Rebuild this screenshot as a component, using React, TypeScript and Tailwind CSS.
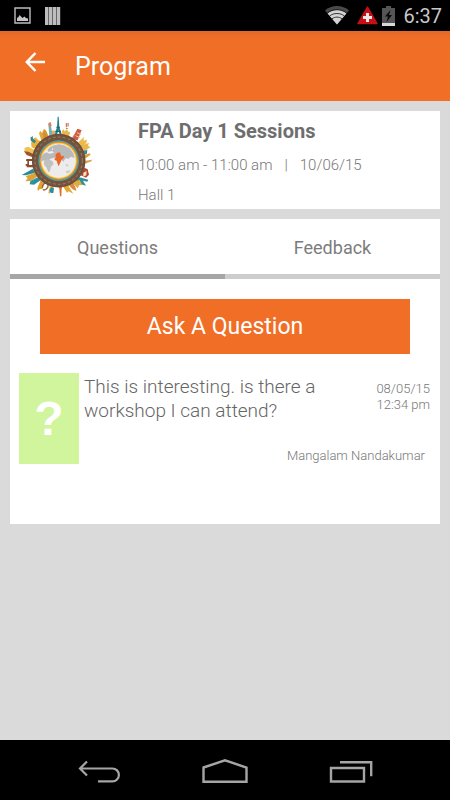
import React, { useState } from "react";

const TABS = ["Questions", "Feedback"];

const QUESTIONS = [
  {
    id: 1,
    text: "This is interesting. is there a workshop I can attend?",
    date: "08/05/15",
    time: "12:34 pm",
    author: "Mangalam Nandakumar",
  },
];

function StatusBar() {
  return (
    <div className="flex h-[31px] items-center justify-between bg-black pr-2 pl-3.5">
      <div className="flex items-center gap-3.5">
        <svg width="17" height="17" viewBox="0 0 17 17" fill="none">
          <path d="M1 1h15v15H1z" stroke="#bdbdbd" strokeWidth="1.4" />
          <path d="M3 14v-3l1.500-1 1-2 2 2 1 1 2-1.500 1.500 1.500 2 .5V14z" fill="#c4c4c4" />
        </svg>
        <svg width="16" height="20" viewBox="0 0 16 20">
          <path d="M0 1h3.200v18H0zM4 1h3.200v18H4zM8 1h3.200v18H8zM12 1h3.200v18H12z" fill="#bdbdbd" />
          <path d="M3.200 1h.8v18h-.8zM7.200 1h.8v18h-.8zM11.200 1h.8v18h-.8z" fill="#777" />
        </svg>
      </div>
      <div className="flex items-center gap-1">
        <svg className="mr-1" width="24" height="19" viewBox="0 0 24 19">
          <path d="M12 18.500L0 4.500C3 1.600 7.500 0 12 0s9 1.600 12 4.500z" fill="#4a4a4a" />
          <path d="M12 18.500L2.600 7.600C5 5.300 8.400 4 12 4s7 1.300 9.400 3.600z" fill="#d4d4d4" />
          <g fill="none" stroke="#111" strokeWidth=".8">
            <path d="M2.200 7.200C5 4.800 8.400 3.700 12 3.700s7 1.100 9.800 3.500" />
            <path d="M4.600 10C6.600 8.300 9.200 7.500 12 7.500s5.400.8 7.400 2.500" />
            <path d="M7 12.800c1.500-1.100 3.200-1.700 5-1.700s3.500.6 5 1.700" />
          </g>
        </svg>
        <svg width="21" height="19" viewBox="0 0 21 19">
          <path d="M10.500 1L20 17.500H1z" fill="#c80f16" stroke="#c80f16" strokeWidth="1.400" strokeLinejoin="round" />
          <path d="M9 7h3v3h3v3h-3v3H9v-3H6v-3h3z" fill="#e8e8e8" />
        </svg>
        <svg className="mr-1" width="13" height="20" viewBox="0 0 13 20">
          <path d="M4 0h5v2h4v15H0V2h4z" fill="#555" />
          <path d="M0 17h13v3H0z" fill="#d8d8d8" />
          <path d="M8.500 4L3 10.500h3L4.500 16 10 9H7z" fill="#080808" />
        </svg>
        <span className="text-xl leading-6 text-[#c8c8c8]">6:37</span>
      </div>
    </div>
  );
}

function GlobeLogo() {
  return (
    <svg width="85" height="95" viewBox="0 0 255 285" role="img" aria-label="Globe ringed by landmarks">
      {/* landmarks on the left side */}
      <path d="M80 94L72 70l4-8 5 7 5-12 7 4 5 12 10 14z" fill="#e0a838" />
      <path d="M83 72l6-13 8 13v16H85z" fill="#d29134" />
      <path d="M48 100l6-13 8-5 8 9 14 4-19 24-15-7z" fill="#e7b13c" />
      <path d="M46 83l7-5 1 8 9 7-4 7-11-7z" fill="#2d8a94" />
      <path d="M29 113l11-3 20 11-4 15-19-9-9-2z" fill="#efc251" />
      <path d="M27 124l13 1 17 8-4 9-18-7z" fill="#9c552e" />
      <path d="M34 147h22v6H42v12h12v7H35v-5h-3v-5h5v-9h-4z" fill="#8d4b2b" />
      <path d="M20 195l34-19 6 12-27 8z" fill="#278b98" />
      <path d="M32 199l31-12 6 12-21 14-17 1 7-9z" fill="#dfa239" />
      <path d="M46 214l25-14 7 10-21 14-13-1z" fill="#2a929c" />
      <path d="M68 232l9-21 11 8-5 17-10 2-2 4-4-3z" fill="#e3a12d" />
      <path d="M82 233c0-11 11-19 16-10s-9 22-14 15" fill="none" stroke="#94613a" strokeWidth="4" />
      <path d="M100 249l5-24 12 3-4 13-8 3v7z" fill="#e3b255" />
      <path d="M103 241l6-9 8 3-2 14h-8z" fill="#27909a" />
      {/* landmarks along the top */}
      <path d="M103 79l-3-37h7l6 34z" fill="#79b0b5" />
      <path d="M100 39l7-3 3 12-8 2z" fill="#d9825c" />
      <path d="M111 77V62h10v15z" fill="#d9b468" />
      <path d="M119 75l7-24 2-31h3l2 31 8 24h-7l-4-15-4 15z" fill="#277d89" />
      <path d="M124 50h11v3h-11zM121 62h17v4h-17z" fill="#16677a" />
      <path d="M139 78l2-14 4-7 4 7 7-6 4 7 6 2-7 19z" fill="#e8b848" />
      <ellipse cx="156" cy="45" rx="6" ry="7" fill="#f3d0bd" />
      <path d="M153 39h3v13h-3zM158 39h3v9h-3z" fill="#dc7962" />
      <path d="M153 54h5v3h-5z" fill="#a67752" />
      <path d="M169 87l19-31 6 3-8 31z" fill="#c87854" />
      <path d="M187 57l13 3-12 31-13-4z" fill="#ce5b42" />
      <path d="M186 68l12 6M182 77l13 6" stroke="#f4c7a0" strokeWidth="3" />
      {/* landmarks on the right side */}
      <path d="M187 100l14-14 5-6v12l10-3-2 10-18 16z" fill="#edbb49" />
      <path d="M194 108l16-5 12-5-3 10 8 3-23 16z" fill="#e6b84f" />
      <path d="M200 124l17-4-1 11-11 5z" fill="#348e98" />
      <path d="M205 137l18-7 4 4-18 12z" fill="#e29c35" />
      <path d="M208 153l22-4v5l-20 7z" fill="#d9a550" />
      <path d="M208 173l10 5 4 16-9 9-16-7z" fill="#b7472d" />
      <path d="M205 188l10-5-1 13-9 4z" fill="#f1e0c3" />
      <path d="M191 201l29 8-3 6-13-3 9 15-20-6-12-9z" fill="#308f98" />
      <path d="M180 212l14-2 8 15-10 1-4 9-14-15z" fill="#dfac3e" />
      <path d="M160 224l13-8 9 17 2 10-11-5z" fill="#d98a3d" />
      <path d="M145 231l13-7 17 27-14-7-5 4z" fill="#e4a92d" />
      <path d="M130 226h13l-3 11-1 22h-4l-2-22z" fill="#df6d27" />
      {/* road ring */}
      <circle cx="131" cy="152" r="80" fill="#73533e" />
      <circle cx="131" cy="152" r="79" fill="none" stroke="#644735" strokeWidth="2" />
      <circle cx="131" cy="152" r="71" fill="none" stroke="#b8977a" strokeWidth="2" strokeDasharray="8 7" />
      <circle cx="131" cy="152" r="61" fill="#4ca3a1" />
      <circle cx="131" cy="152" r="57" fill="#f18524" />
      <circle cx="131" cy="152" r="54" fill="#f8cd53" />
      <circle cx="131" cy="152" r="51" fill="#fff1c4" />
      <circle cx="132" cy="152" r="49" fill="#ececec" />
      <path d="M105 111l12-5 15-3 15 3 17 9 11 14 4 15-11-4-8 7-8-3-7 11-9-10-9 6-9-8-12 3-6 8-13-3-11 4 3-16 9-9 12-5-3-6z" fill="#b9b9b9" />
      <path d="M87 151l12-3 13 5 4 9-8 8-3 13-5 4-5-14-8-9z" fill="#c1c1c1" />
      <path d="M151 161l8 3 2 6-7-2zM151 184l13-4 2 5-9 6z" fill="#cdcdcd" />
      <path d="M94 127l18-4 5 5-13 3zM111 112l4 8-4-1z" fill="#f0f0f0" />
      <path d="M126 129l8-2 3 7 2 5 8-1-1 6-6 5-5 11-4 9-4-9-2-8-7-3 5-8-2-5z" fill="#ec6528" />
    </svg>
  );
}

function SessionCard() {
  return (
    <section className="flex h-[98px] bg-white pl-[5px]">
      <div className="-mt-px w-[85px] shrink-0">
        <GlobeLogo />
      </div>
      <div className="pt-1.5 pl-[38px] text-[#777]">
        <h2 className="text-xl leading-7 font-bold text-[#6e6e6e]">FPA Day 1 Sessions</h2>
        <p className="mt-2 flex text-[15px] leading-6 font-light">
          <span>10:00 am - 11:00 am</span>
          <span className="px-3">|</span>
          <span>10/06/15</span>
        </p>
        <p className="mt-1.5 text-[15px] leading-6 font-light">Hall 1</p>
      </div>
    </section>
  );
}

function QuestionItem({ question }: { question: (typeof QUESTIONS)[number] }) {
  return (
    <li className="flex">
      <div className="flex h-[91px] w-[60px] shrink-0 items-center justify-center bg-[#d1f59c] font-['Liberation_Sans',sans-serif] text-5xl font-bold text-white">
        ?
      </div>
      <div className="flex flex-1 flex-col justify-between pl-[5px]">
        <div className="flex justify-between">
          <p className="w-[250px] pt-0.5 text-[19px] leading-6 font-light text-[#666]">{question.text}</p>
          <div className="pt-2 text-right text-[13px] leading-4 font-light text-[#777]">
            <div>{question.date}</div>
            <div>{question.time}</div>
          </div>
        </div>
        <div className="pr-[5px] text-right text-[13px] leading-4 font-light text-[#777]">{question.author}</div>
      </div>
    </li>
  );
}

function NavBar() {
  return (
    <nav className="flex h-[60px] justify-center bg-black text-[#a5a5a5]">
      <button type="button" aria-label="Back" className="flex w-[126px] items-center justify-center pt-1">
        <svg width="44" height="24" viewBox="0 0 44 24" fill="none" stroke="currentColor" strokeWidth="2.2">
          <path d="M10 1.500L3 8.500l7 7M3 8.500h32.500a6.300 6.300 0 0 1 0 12.800H21" />
        </svg>
      </button>
      <button type="button" aria-label="Home" className="flex w-[126px] items-center justify-center pt-0.5">
        <svg width="48" height="26" viewBox="0 0 48 26" fill="none" stroke="currentColor" strokeWidth="2.4">
          <path d="M2.500 9.500L24 2.300l21.500 7.200v14.200h-43z" />
        </svg>
      </button>
      <button type="button" aria-label="Recent apps" className="flex w-[126px] items-center justify-center pt-1">
        <svg width="44" height="24" viewBox="0 0 44 24" fill="none" stroke="currentColor" strokeWidth="2.4">
          <path d="M2 8h33v13.500H2zM11 2.200h31.200v14" />
        </svg>
      </button>
    </nav>
  );
}

export default function App() {
  const [tab, setTab] = useState("Questions");

  return (
    <div className="flex min-h-screen flex-col bg-[#dadada] font-[Roboto,sans-serif]">
      <StatusBar />
      <header className="flex h-[70px] bg-[#f06e26] bg-linear-to-b from-[#e4682a] to-[#f06e26] to-10% pl-[25px] text-white">
        <button type="button" aria-label="Go back" className="flex h-[61px] w-[50px] items-center">
          <svg width="20" height="20" viewBox="0 0 20 20" fill="none" stroke="currentColor" strokeWidth="2.5">
            <path d="M10.500 1L1.800 10l8.700 9M1.800 10H20" />
          </svg>
        </button>
        <h1 className="pt-5 text-[25px] leading-8">Program</h1>
      </header>

      <main className="flex flex-1 flex-col gap-2.5 p-2.5">
        <SessionCard />

        <section className="bg-white pb-[60px]">
          <div role="tablist" className="grid grid-cols-2">
            {TABS.map((name) => (
              <button
                key={name}
                type="button"
                role="tab"
                aria-selected={tab === name}
                onClick={() => setTab(name)}
                className={`h-[60px] border-b-5 pt-0.5 text-lg text-[#7c7c7c] ${
                  tab === name ? "border-[#a6a6a6]" : "border-[#cdcdcd]"
                }`}
              >
                {name}
              </button>
            ))}
          </div>
          <div className="px-[30px] pt-5">
            <button type="button" className="h-[55px] w-full bg-[#f06e26] pt-0.5 text-[23px] text-white">
              Ask A Question
            </button>
          </div>
          <ul className="mt-[19px] pr-2.5 pl-[9px]">
            {QUESTIONS.map((q) => (
              <QuestionItem key={q.id} question={q} />
            ))}
          </ul>
        </section>
      </main>

      <NavBar />
    </div>
  );
}
